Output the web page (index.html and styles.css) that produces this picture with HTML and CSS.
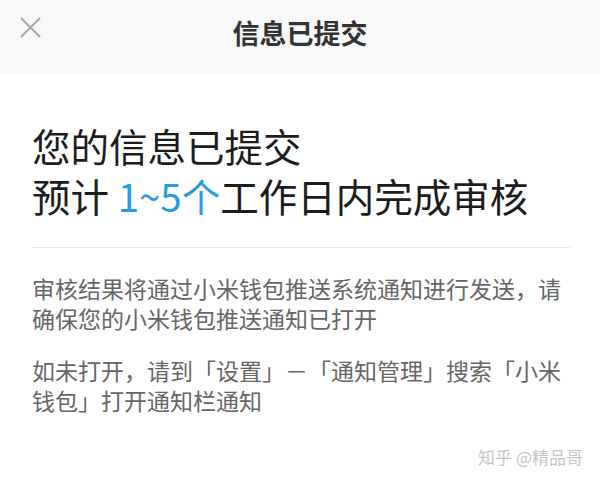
FILE: index.html
```html
<!DOCTYPE html>
<html lang="zh-CN">
<head>
<meta charset="utf-8">
<title>信息已提交</title>
<link rel="stylesheet" href="styles.css">
</head>
<body>
<div class="page">
  <header class="header">
    <svg class="close" width="21" height="21" viewBox="0 0 21 21" aria-hidden="true">
      <path d="M1 1 L20 20 M20 1 L1 20" stroke="#a9a9a9" stroke-width="2" fill="none"/>
    </svg>
    <div class="title">信息已提交</div>
    <div class="spacer"></div>
  </header>
  <main class="content">
    <h1 class="heading">您的信息已提交<br>预计 <span class="accent">1~5个</span>工作日内完成审核</h1>
    <div class="divider"></div>
    <p class="para">审核结果将通过小米钱包推送系统通知进行发送，请确保您的小米钱包推送通知已打开</p>
    <p class="para para-second">如未打开，请到「设置」－「通知管理」搜索「小米钱包」打开通知栏通知</p>
  </main>
  <div class="watermark">知乎 @精品哥</div>
</div>
</body>
</html>
```
FILE: styles.css
```css
html, body {
  margin: 0;
  padding: 0;
  background: #ffffff;
}
body {
  font-family: "Noto Sans CJK SC", "Noto Sans", sans-serif;
}
.page {
  position: relative;
  width: 600px;
  height: 482px;
  overflow: hidden;
  background: #ffffff;
}
.header {
  height: 74px;
  background: #f8f8f8;
  display: grid;
  grid-template-columns: 1fr auto 1fr;
  align-items: start;
}
.close {
  justify-self: start;
  margin-left: 20px;
  margin-top: 17px;
  display: block;
}
.title {
  margin-top: 13px;
  font-size: 27px;
  line-height: 40px;
  font-weight: 700;
  color: #333333;
}
.content {
  padding: 0 30px 0 32px;
}
.heading {
  margin: 46px 0 0 0;
  font-size: 38.5px;
  line-height: 50px;
  font-weight: 400;
  color: #1c1c1c;
}
.accent {
  color: #2a9be0;
}
.divider {
  margin-top: 27px;
  height: 1px;
  background: #e8e8e8;
}
.para {
  margin: 25px 0 0 0;
  font-size: 23px;
  line-height: 30px;
  color: #666666;
}
.para-second {
  margin-top: 22px;
}
.watermark {
  position: absolute;
  right: 17px;
  bottom: 15px;
  font-size: 17px;
  line-height: 20px;
  color: #c6c6c6;
}
```
